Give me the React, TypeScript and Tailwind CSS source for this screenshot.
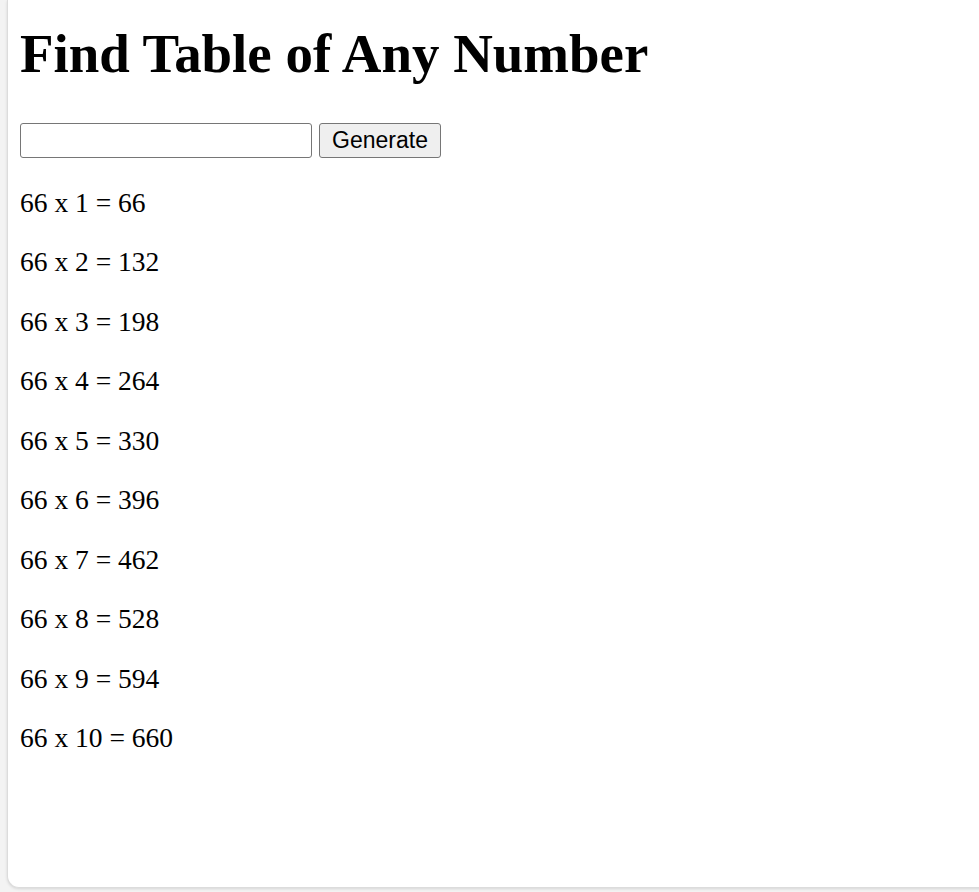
import { useState } from 'react';

const serif = { fontFamily: '"Liberation Serif", "Times New Roman", serif' };

export default function App() {
  const [value, setValue] = useState('');
  const n = 66;
  const rows = Array.from({ length: 10 }, (_, i) => i + 1);

  return (
    <div className="h-[892px] overflow-hidden bg-[#f3f3f3] pl-[7px]">
      <div className="h-[888px] w-[1000px] rounded-bl-[12px] border-b border-l border-[#dcdcdc] bg-white pl-[12px] shadow-[0_1px_3px_rgba(0,0,0,0.12)] pt-[22px] text-black">
        <h1 className="m-0 text-[54.9px] font-bold leading-[64px]" style={serif}>
          Find Table of Any Number
        </h1>

        <div className="mt-[37px] flex h-[35px] items-center gap-[7px]">
          <input
            type="text"
            value={value}
            onChange={e => setValue(e.target.value)}
            className="h-[35px] w-[292px] rounded-[3px] border border-[#767676] bg-white px-1 outline-none"
          />
          <button
            className="h-[35px] w-[122px] rounded-[3px] border border-[#767676] bg-[#efefef] text-[23px] leading-none text-black"
            style={{ fontFamily: '"Liberation Sans", Arial, sans-serif' }}
          >
            Generate
          </button>
        </div>

        <div className="mt-[29px] flex flex-col gap-[27.66px]" style={serif}>
          {rows.map(i => (
            <p key={i} className="m-0 text-[27.5px] leading-[31.78px]">
              {n} x {i} = {n * i}
            </p>
          ))}
        </div>
      </div>
    </div>
  );
}
